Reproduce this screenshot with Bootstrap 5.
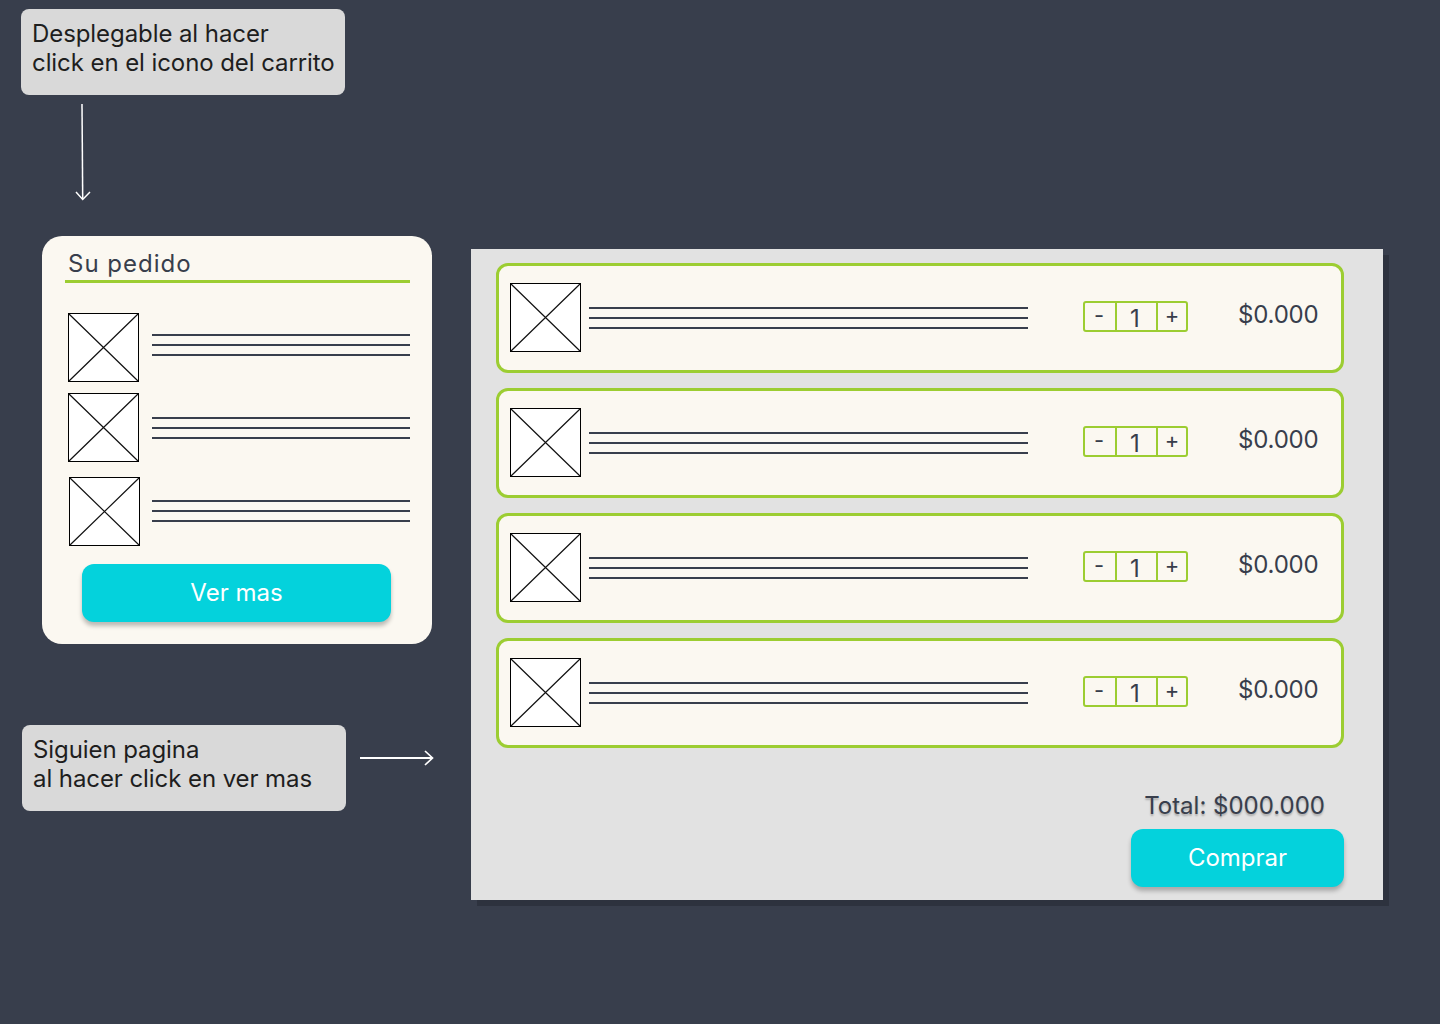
<!DOCTYPE html>
<html lang="es">
<head>
    <meta charset="UTF-8">
    <meta name="viewport" content="width=device-width, initial-scale=1.0">
    <title>Carrito</title>
    <link rel="stylesheet" href="https://cdn.jsdelivr.net/npm/bootstrap@5.3.0/dist/css/bootstrap.min.css">
    <style>
        body {
            background-color: #383e4c;
            font-family: Inter, "Liberation Sans", sans-serif;
            color: #383e4c;
            height: 1024px;
            overflow: hidden;
        }
        .canvas-item {
            position: absolute;
        }
        .note-box {
            width: 324px;
            height: 86px;
            padding: 10px 0 0 11px;
            background: #d9d9d9;
            border-radius: 8px;
            color: #1e1e1e;
            font-size: 24px;
            line-height: 29px;
            letter-spacing: -.08px;
            white-space: nowrap;
        }
        .note-one { left: 21px; top: 9px; }
        .note-two { left: 22px; top: 725px; }
        .arrow-down { left: 74px; top: 103px; }
        .arrow-right { left: 359px; top: 748px; }
        .order-panel {
            left: 42px;
            top: 236px;
            width: 390px;
            height: 408px;
            padding: 11px 22px 0 23px;
            background: #fbf8f1;
            border-radius: 20px;
        }
        .order-title {
            margin: 0;
            padding-left: 3px;
            height: 36px;
            border-bottom: 3px solid #9ccd32;
            font-size: 24px;
            line-height: 34px;
            font-weight: 400;
            letter-spacing: 1px;
        }
        .order-item {
            padding-left: 3px;
            height: 69px;
        }
        .order-item .text-lines { margin-left: 13px; }
        .order-first { margin-top: 30px; }
        .order-first .text-lines { margin-top: 21px; }
        .order-second { margin-top: 11px; }
        .order-second .text-lines { margin-top: 24px; }
        .order-third { margin-top: 15px; }
        .order-third .thumb { margin-left: 1px; }
        .order-third .text-lines { margin: 23px 0 0 12px; }
        .thumb {
            display: block;
            flex: none;
            width: 71px;
            height: 69px;
        }
        .text-lines {
            flex: 1 1 auto;
            height: 22px;
            border-top: 2px solid #383e4c;
            border-bottom: 2px solid #383e4c;
        }
        .text-lines::after {
            content: "";
            display: block;
            height: 2px;
            margin-top: 8px;
            background: #383e4c;
        }
        .cta-btn {
            display: block;
            height: 58px;
            border: 0;
            border-radius: 12px;
            background: #04d2dc;
            color: #fff;
            font-size: 24px;
            box-shadow: 0 4px 4px rgba(0, 0, 0, .25);
            padding: 0;
        }
        .order-panel .cta-btn {
            width: 309px;
            margin: 18px 0 0 17px;
        }
        .cart-page {
            left: 471px;
            top: 249px;
            width: 912px;
            height: 651px;
            padding: 14px 39px 0 25px;
            background: #e2e2e2;
            box-shadow: 6px 6px 0 #2d323e;
        }
        .cart-row {
            height: 110px;
            margin-bottom: 15px;
            padding: 17px 0 0 11px;
            background: #fbf8f1;
            border: 3px solid #9ccd32;
            border-radius: 12px;
        }
        .cart-row .text-lines {
            flex: none;
            width: 439px;
            margin: 24px 0 0 8px;
        }
        .qty-box {
            flex: none;
            width: 105px;
            height: 31px;
            margin: 18px 0 0 55px;
            border: 2px solid #9ccd32;
            border-radius: 3px;
            font-size: 22px;
            line-height: 25px;
            text-align: center;
        }
        .qty-box span:first-child {
            width: 30px;
            padding-right: 2px;
        }
        .qty-box span:nth-child(2) {
            width: 43px;
            padding-right: 3px;
            border-left: 2px solid #9ccd32;
            border-right: 2px solid #9ccd32;
            font-size: 24px;
            line-height: 31px;
        }
        .qty-box span:last-child { width: 28px; }
        .row-price {
            margin: 17px 0 0 50px;
            font-size: 24px;
            line-height: 29px;
            letter-spacing: -.2px;
        }
        .cart-total {
            margin-top: 43px;
            padding-right: 19px;
            font-size: 24px;
            line-height: 29px;
            text-align: right;
            text-shadow: 0 2px 2px rgba(0, 0, 0, .25);
        }
        .cart-page .cta-btn {
            width: 213px;
            margin: 9px 0 0 auto;
        }
    </style>
</head>
<body>
    <div class="canvas-item note-box note-one">Desplegable al hacer<br>click en el icono del carrito</div>
    <svg class="canvas-item arrow-down" width="18" height="100" viewBox="0 0 18 100" fill="none" stroke="#fff" stroke-width="1.500">
        <path d="M8 1 L8.700 96"/>
        <path d="M2 89 L8.700 96.500 L16 89"/>
    </svg>

    <div class="canvas-item order-panel">
        <h2 class="order-title">Su pedido</h2>
        <div class="d-flex order-item order-first">
            <svg class="thumb" viewBox="0 0 71 69"><use href="#x-img"/></svg>
            <div class="text-lines"></div>
        </div>
        <div class="d-flex order-item order-second">
            <svg class="thumb" viewBox="0 0 71 69"><use href="#x-img"/></svg>
            <div class="text-lines"></div>
        </div>
        <div class="d-flex order-item order-third">
            <svg class="thumb" viewBox="0 0 71 69"><use href="#x-img"/></svg>
            <div class="text-lines"></div>
        </div>
        <button class="cta-btn" type="button">Ver mas</button>
    </div>

    <div class="canvas-item note-box note-two">Siguien pagina<br>al hacer click en ver mas</div>
    <svg class="canvas-item arrow-right" width="76" height="20" viewBox="0 0 76 20" fill="none" stroke="#fff" stroke-width="2">
        <path d="M1 10 L73 10"/>
        <path d="M66 3 L73.500 10 L66 17" stroke-width="1.700"/>
    </svg>

    <div class="canvas-item cart-page">
        <div class="d-flex cart-row">
            <svg class="thumb" viewBox="0 0 71 69"><use href="#x-img"/></svg>
            <div class="text-lines"></div>
            <div class="d-flex qty-box"><span>-</span><span>1</span><span>+</span></div>
            <div class="row-price">$0.000</div>
        </div>
        <div class="d-flex cart-row">
            <svg class="thumb" viewBox="0 0 71 69"><use href="#x-img"/></svg>
            <div class="text-lines"></div>
            <div class="d-flex qty-box"><span>-</span><span>1</span><span>+</span></div>
            <div class="row-price">$0.000</div>
        </div>
        <div class="d-flex cart-row">
            <svg class="thumb" viewBox="0 0 71 69"><use href="#x-img"/></svg>
            <div class="text-lines"></div>
            <div class="d-flex qty-box"><span>-</span><span>1</span><span>+</span></div>
            <div class="row-price">$0.000</div>
        </div>
        <div class="d-flex cart-row">
            <svg class="thumb" viewBox="0 0 71 69"><use href="#x-img"/></svg>
            <div class="text-lines"></div>
            <div class="d-flex qty-box"><span>-</span><span>1</span><span>+</span></div>
            <div class="row-price">$0.000</div>
        </div>
        <div class="cart-total">Total: $000.000</div>
        <button class="cta-btn" type="button">Comprar</button>
    </div>

    <svg width="0" height="0" class="position-absolute">
        <symbol id="x-img" viewBox="0 0 71 69">
            <rect x=".5" y=".5" width="70" height="68" fill="#fff" stroke="#000"/>
            <path d="M1 1 L70 68 M70 1 L1 68" stroke="#111" stroke-width="1.200" fill="none"/>
        </symbol>
    </svg>
    <script src="https://cdn.jsdelivr.net/npm/bootstrap@5.3.0/dist/js/bootstrap.bundle.min.js"></script>
</body>
</html>
